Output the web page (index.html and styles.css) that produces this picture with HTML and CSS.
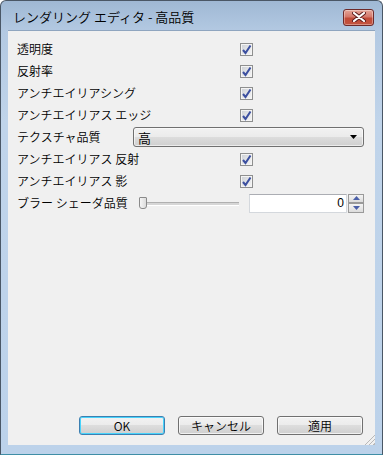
FILE: index.html
```html
<!DOCTYPE html>
<html lang="ja">
<head>
<meta charset="utf-8">
<title>レンダリング エディタ - 高品質</title>
<link rel="stylesheet" href="styles.css">
</head>
<body>
<div class="window">
  <div class="titlebar">
    <span class="title">レンダリング エディタ - 高品質</span>
    <button class="close" aria-label="閉じる">
      <svg width="14" height="10" viewBox="0 0 14 10"><path d="M2 1 L12 9 M12 1 L2 9" stroke="#5a1c1c" stroke-width="4" stroke-linecap="round"/><path d="M2 1 L12 9 M12 1 L2 9" stroke="#ffffff" stroke-width="2.2" stroke-linecap="round"/></svg>
    </button>
  </div>
  <div class="content">
    <div class="form">
      <div class="label">透明度</div>
      <div class="ctrl"><span class="check"><svg width="11" height="11" viewBox="0 0 11 11"><path d="M2 6 L4.5 9 L9.5 1.5" fill="none" stroke="#3c50a0" stroke-width="2"/></svg></span></div>
      <div class="label">反射率</div>
      <div class="ctrl"><span class="check"><svg width="11" height="11" viewBox="0 0 11 11"><path d="M2 6 L4.5 9 L9.5 1.5" fill="none" stroke="#3c50a0" stroke-width="2"/></svg></span></div>
      <div class="label">アンチエイリアシング</div>
      <div class="ctrl"><span class="check"><svg width="11" height="11" viewBox="0 0 11 11"><path d="M2 6 L4.5 9 L9.5 1.5" fill="none" stroke="#3c50a0" stroke-width="2"/></svg></span></div>
      <div class="label">アンチエイリアス エッジ</div>
      <div class="ctrl"><span class="check"><svg width="11" height="11" viewBox="0 0 11 11"><path d="M2 6 L4.5 9 L9.5 1.5" fill="none" stroke="#3c50a0" stroke-width="2"/></svg></span></div>
      <div class="label">テクスチャ品質</div>
      <div class="ctrl"><div class="select"><span>高</span><svg width="8" height="4" viewBox="0 0 8 4"><path d="M0 0 H7 L3.5 4 Z" fill="#000"/></svg></div></div>
      <div class="label">アンチエイリアス 反射</div>
      <div class="ctrl"><span class="check"><svg width="11" height="11" viewBox="0 0 11 11"><path d="M2 6 L4.5 9 L9.5 1.5" fill="none" stroke="#3c50a0" stroke-width="2"/></svg></span></div>
      <div class="label">アンチエイリアス 影</div>
      <div class="ctrl"><span class="check"><svg width="11" height="11" viewBox="0 0 11 11"><path d="M2 6 L4.5 9 L9.5 1.5" fill="none" stroke="#3c50a0" stroke-width="2"/></svg></span></div>
      <div class="label">ブラー シェーダ品質</div>
      <div class="ctrl slider-row">
        <div class="slider"><span class="track"></span><span class="thumb"></span></div>
        <div class="spin">
          <div class="spin-input">0</div>
          <div class="spin-btns">
            <span class="spin-btn"><svg width="7" height="4" viewBox="0 0 7 4"><path d="M0 4 H7 L3.5 0 Z" fill="#4a5fa8"/></svg></span>
            <span class="spin-btn"><svg width="7" height="4" viewBox="0 0 7 4"><path d="M0 0 H7 L3.5 4 Z" fill="#4a5fa8"/></svg></span>
          </div>
        </div>
      </div>
    </div>
    <div class="buttons">
      <button class="btn default">OK</button>
      <button class="btn">キャンセル</button>
      <button class="btn">適用</button>
    </div>
    <div class="grip"></div>
  </div>
</div>
</body>
</html>
```

FILE: styles.css
```css
html, body {
  margin: 0;
  padding: 0;
  background: #ffffff;
}
body {
  font-family: "Noto Sans CJK JP", "Noto Sans", sans-serif;
  font-size: 12px;
  font-weight: 350;
  color: #000;
}
.window {
  width: 383px;
  height: 455px;
  box-sizing: border-box;
  border: 1px solid #4a5766;
  border-bottom-color: #3f8ea6;
  border-radius: 6px 6px 0 0;
  background: linear-gradient(180deg, #9fb8d4 0px, #b3c9e2 30px, #c0d4ea 120px, #bcd2ea 100%);
  padding: 0 7px 9px 7px;
  display: flex;
  flex-direction: column;
}
.titlebar {
  height: 29px;
  display: flex;
  align-items: center;
  justify-content: space-between;
  padding: 0 1px 0 5px;
}
.title {
  font-size: 13px;
  color: #000;
  margin-top: 2px;
}
.close {
  width: 31px;
  height: 17px;
  margin-top: 3px;
  padding: 0;
  border: 1px solid #6e2a2a;
  border-radius: 3px;
  background: linear-gradient(180deg, #e5a598 0%, #d4786b 45%, #c14a38 55%, #c2543f 100%);
  box-shadow: inset 0 0 0 1px rgba(255,255,255,0.35);
  display: flex;
  align-items: center;
  justify-content: center;
}
.content {
  flex: 1;
  background: #f0f0f0;
  border: 1px solid #8fa5bf;
  border-width: 1px 0 0 0;
  display: flex;
  flex-direction: column;
  position: relative;
  padding: 7px 11px 10px 9px;
}
.form {
  display: grid;
  grid-template-columns: 116px 231px;
  grid-auto-rows: 22px;
  align-items: center;
}
.label {
  line-height: 22px;
  white-space: nowrap;
}
.ctrl {
  display: flex;
  align-items: center;
  height: 22px;
}
.check {
  margin-left: 107px;
  width: 11px;
  height: 11px;
  border: 1px solid #8e8f8f;
  background: linear-gradient(135deg, #cbcfd5 0%, #e7e8ea 60%, #f6f6f6 100%);
  box-shadow: inset 0 0 0 1px #f4f4f4;
  display: flex;
  align-items: center;
  justify-content: center;
}
.select {
  width: 231px;
  height: 20px;
  box-sizing: border-box;
  border: 1px solid #707070;
  border-radius: 3px;
  background: linear-gradient(180deg, #f2f2f2 0%, #ebebeb 50%, #dddddd 50%, #cfcfcf 100%);
  box-shadow: inset 0 0 0 1px rgba(255,255,255,0.6);
  display: flex;
  align-items: center;
  justify-content: space-between;
  padding: 0 5px 0 4px;
}
.select span {
  font-size: 13px;
}
.slider-row {
  position: relative;
}
.slider {
  position: relative;
  width: 101px;
  height: 22px;
  margin-left: 6px;
}
.track {
  position: absolute;
  left: 0;
  right: 0;
  top: 10px;
  height: 2px;
  background: #d6d6d6;
  border-top: 1px solid #b0b0b0;
  border-bottom: 1px solid #ffffff;
}
.thumb {
  position: absolute;
  left: 0;
  top: 5px;
  width: 6px;
  height: 10px;
  border: 1px solid #8a8a8a;
  border-radius: 1px 1px 3px 3px;
  background: linear-gradient(90deg, #f5f5f5, #dcdcdc);
}
.spin {
  display: flex;
  margin-left: 10px;
  height: 19px;
}
.spin-input {
  width: 98px;
  box-sizing: border-box;
  border: 1px solid #d4d8dd;
  border-top-color: #abadb3;
  background: #fff;
  text-align: right;
  padding-right: 2px;
  line-height: 17px;
  font-family: "Liberation Sans", sans-serif;
  font-weight: 400;
  font-size: 12px;
}
.spin-btns {
  display: flex;
  flex-direction: column;
  width: 16px;
  margin-left: 1px;
}
.spin-btn {
  flex: 1;
  box-sizing: border-box;
  border: 1px solid #9a9a9a;
  background: linear-gradient(180deg, #f4f4f4, #dcdcdc);
  display: flex;
  align-items: center;
  justify-content: center;
}
.buttons {
  margin-top: auto;
  display: flex;
  justify-content: flex-end;
  gap: 13px;
  padding-right: 1px;
}
.btn {
  width: 86px;
  height: 19px;
  box-sizing: border-box;
  padding: 0;
  border: 1px solid #707070;
  border-radius: 3px;
  background: linear-gradient(180deg, #f2f2f2 0%, #ebebeb 50%, #dddddd 50%, #cfcfcf 100%);
  box-shadow: inset 0 0 0 1px rgba(255,255,255,0.7);
  font-family: "Noto Sans CJK JP", "Noto Sans", sans-serif;
  font-weight: 350;
  font-size: 12px;
  line-height: 16px;
  color: #000;
}
.btn.default {
  border-color: #3c7fb1;
  box-shadow: inset 0 0 0 1px #48d3fb;
}
.grip {
  position: absolute;
  right: 0;
  bottom: 0;
  width: 11px;
  height: 11px;
  background: repeating-linear-gradient(135deg, transparent 0px, transparent 2px, #b8b8b8 2px, #b8b8b8 3px);
  clip-path: polygon(100% 0, 100% 100%, 0 100%);
}
```
